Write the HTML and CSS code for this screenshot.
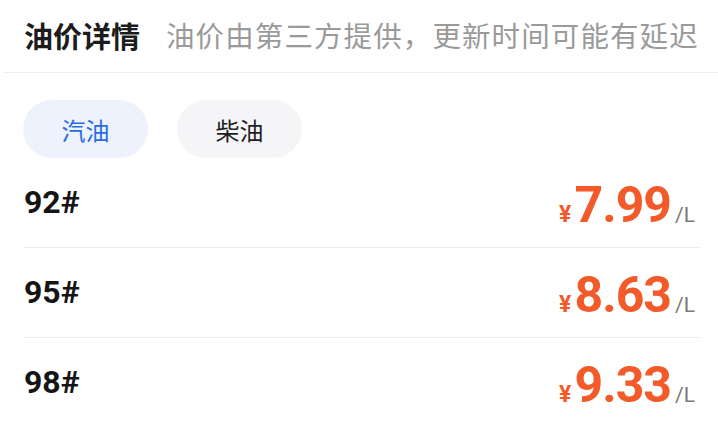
FILE: index.html
```html
<!DOCTYPE html>
<html lang="zh">
<head>
<meta charset="utf-8">
<link rel="stylesheet" href="styles.css">
</head>
<body>
<div class="page">
  <div class="header">
    <span class="title">油价详情</span>
    <span class="subtitle">油价由第三方提供，更新时间可能有延迟</span>
  </div>
  <div class="tabs">
    <div class="tab active">汽油</div>
    <div class="tab">柴油</div>
  </div>
  <div class="list">
    <div class="row">
      <span class="grade">92#</span>
      <span class="price"><span class="yen">¥</span><span class="num">7.99</span><span class="unit">/L</span></span>
    </div>
    <div class="row">
      <span class="grade">95#</span>
      <span class="price"><span class="yen">¥</span><span class="num">8.63</span><span class="unit">/L</span></span>
    </div>
    <div class="row">
      <span class="grade">98#</span>
      <span class="price"><span class="yen">¥</span><span class="num">9.33</span><span class="unit">/L</span></span>
    </div>
  </div>
</div>
</body>
</html>
```

FILE: styles.css
```css
html, body {
  margin: 0;
  padding: 0;
  background: #ffffff;
}
.page {
  width: 718px;
  height: 426px;
  overflow: hidden;
  font-family: "Noto Sans CJK SC", "Noto Sans", sans-serif;
}
.header {
  box-sizing: border-box;
  height: 73px;
  margin-left: 3px;
  padding-left: 21px;
  display: flex;
  align-items: center;
  gap: 26px;
  border-bottom: 1px solid #f0f0f0;
}
.title {
  font-size: 29px;
  font-weight: 700;
  color: #1c1c1c;
  line-height: 1;
  padding-bottom: 2px;
}
.subtitle {
  font-size: 28.5px;
  color: #9a9a9a;
  line-height: 1;
  letter-spacing: 1.1px;
  padding-bottom: 2px;
}
.tabs {
  display: flex;
  gap: 29px;
  padding: 27px 0 0 23px;
}
.tab {
  width: 125px;
  height: 58px;
  border-radius: 29px;
  background: #f5f5f7;
  color: #1f1f1f;
  font-size: 24px;
  display: flex;
  align-items: center;
  justify-content: center;
}
.tab.active {
  background: #edf2fc;
  color: #2a6be0;
}
.list {
  margin: 0 18px 0 24px;
}
.row {
  box-sizing: border-box;
  height: 90px;
  border-bottom: 1px solid #ededed;
  display: flex;
  align-items: center;
  justify-content: space-between;
}
.row:last-child {
  border-bottom: none;
}
.grade {
  font-family: Roboto, "Noto Sans", sans-serif;
  font-size: 32px;
  font-weight: 700;
  color: #151515;
  padding-bottom: 2px;
}
.price {
  display: flex;
  align-items: baseline;
  padding-right: 5px;
  color: #f25a2a;
  font-family: Roboto, "Noto Sans", sans-serif;
  padding-top: 4px;
}
.yen {
  font-size: 23px;
  font-weight: 700;
  margin-right: 3px;
}
.num {
  font-size: 50px;
  font-weight: 700;
  letter-spacing: -1px;
  line-height: 1;
}
.unit {
  font-size: 21px;
  color: #7a7a7a;
  margin-left: 4px;
}
```
